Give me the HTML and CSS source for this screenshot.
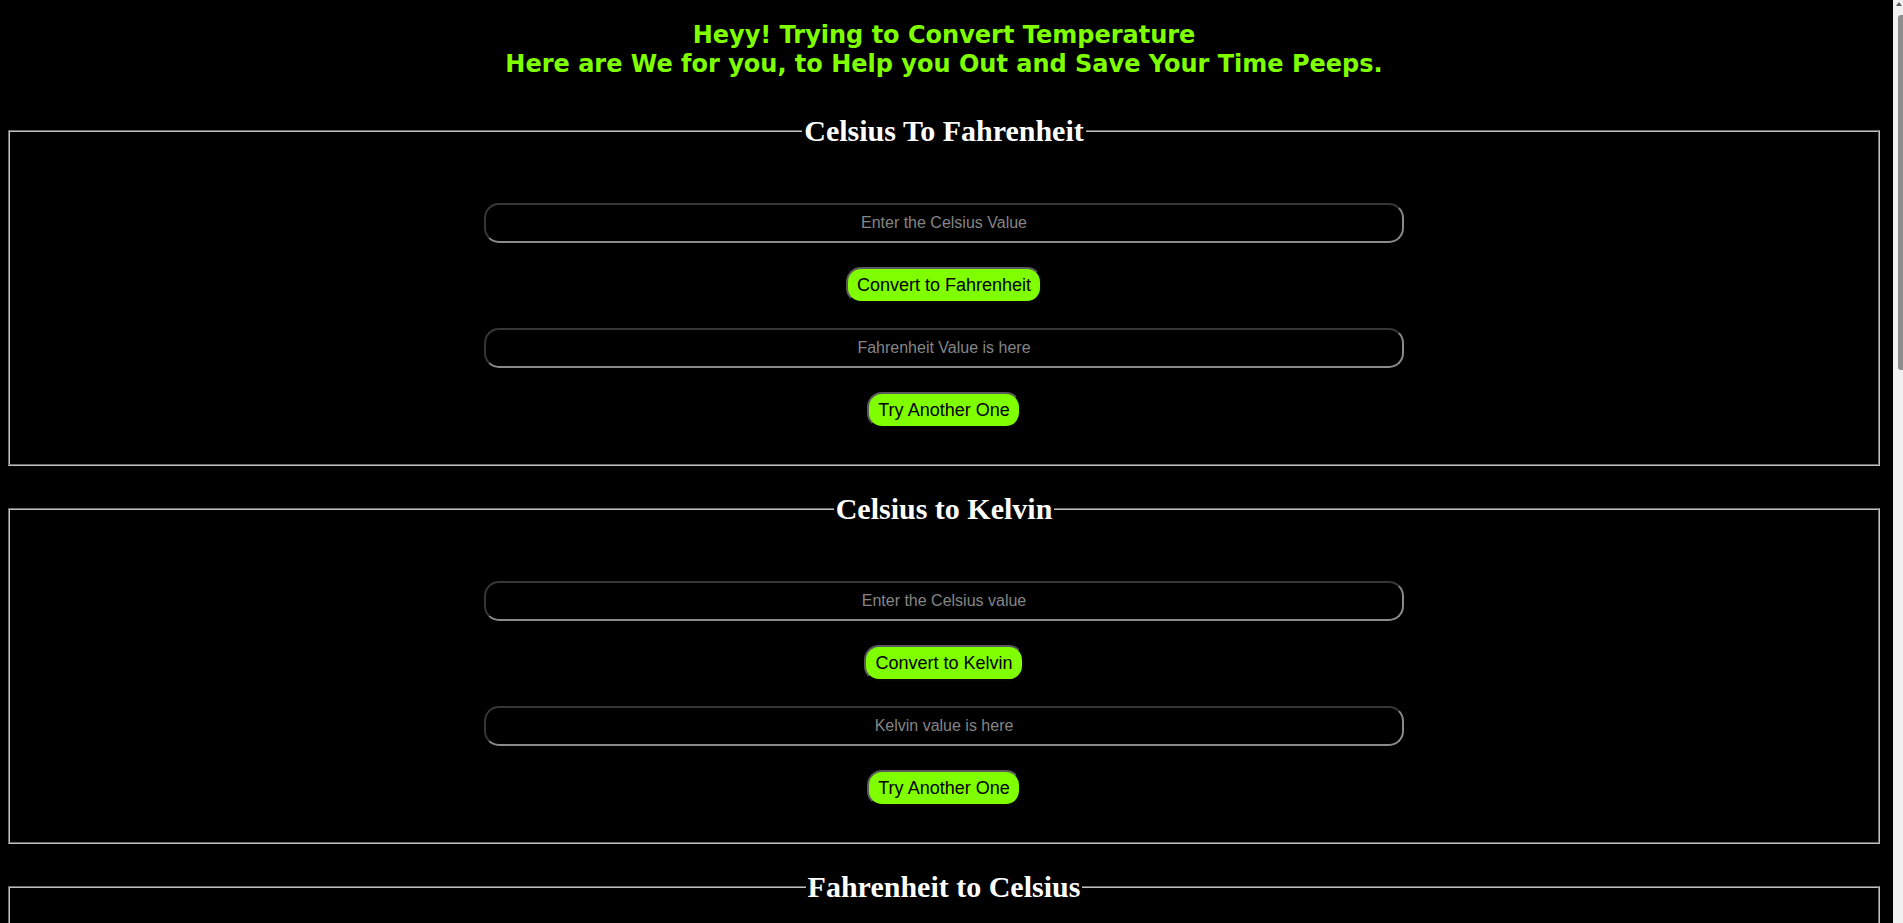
FILE: index.html
```html
<!DOCTYPE html>
<html lang="en">
<head>
<meta charset="utf-8">
<title>Temperature Converter</title>
<link rel="stylesheet" href="styles.css">
</head>
<body>
<h2 class="title">Heyy! Trying to Convert Temperature<br>Here are We for you, to Help you Out and Save Your Time Peeps.</h2>

<fieldset class="card">
  <legend class="card-title">Celsius To Fahrenheit</legend>
  <div class="stack">
    <input class="field" type="text" placeholder="Enter the Celsius Value">
    <button class="btn" type="button">Convert to Fahrenheit</button>
    <input class="field" type="text" placeholder="Fahrenheit Value is here" readonly>
    <button class="btn" type="button">Try Another One</button>
  </div>
</fieldset>

<fieldset class="card">
  <legend class="card-title">Celsius to Kelvin</legend>
  <div class="stack">
    <input class="field" type="text" placeholder="Enter the Celsius value">
    <button class="btn" type="button">Convert to Kelvin</button>
    <input class="field" type="text" placeholder="Kelvin value is here" readonly>
    <button class="btn" type="button">Try Another One</button>
  </div>
</fieldset>

<fieldset class="card">
  <legend class="card-title">Fahrenheit to Celsius</legend>
  <div class="stack">
    <input class="field" type="text" placeholder="Enter the Fahrenheit value">
    <button class="btn" type="button">Convert to Celsius</button>
    <input class="field" type="text" placeholder="Celsius value is here" readonly>
    <button class="btn" type="button">Try Another One</button>
  </div>
</fieldset>

<fieldset class="card">
  <legend class="card-title">Fahrenheit to Kelvin</legend>
  <div class="stack">
    <input class="field" type="text" placeholder="Enter the Fahrenheit value">
    <button class="btn" type="button">Convert to Kelvin</button>
    <input class="field" type="text" placeholder="Kelvin value is here" readonly>
    <button class="btn" type="button">Try Another One</button>
  </div>
</fieldset>

<fieldset class="card">
  <legend class="card-title">Kelvin to Celsius</legend>
  <div class="stack">
    <input class="field" type="text" placeholder="Enter the Kelvin value">
    <button class="btn" type="button">Convert to Celsius</button>
    <input class="field" type="text" placeholder="Celsius value is here" readonly>
    <button class="btn" type="button">Try Another One</button>
  </div>
</fieldset>

<fieldset class="card">
  <legend class="card-title">Kelvin to Fahrenheit</legend>
  <div class="stack">
    <input class="field" type="text" placeholder="Enter the Kelvin value">
    <button class="btn" type="button">Convert to Fahrenheit</button>
    <input class="field" type="text" placeholder="Fahrenheit value is here" readonly>
    <button class="btn" type="button">Try Another One</button>
  </div>
</fieldset>

<div class="scrollbar" aria-hidden="true">
  <div class="scrollbar-arrow"></div>
  <div class="scrollbar-thumb"></div>
</div>
</body>
</html>
```
FILE: styles.css
```css
html {
  background: #000;
}

body {
  margin: 8px 23px 8px 8px;
  background: #000;
  font-family: "Liberation Sans", Arial, sans-serif;
}

.title {
  margin: 13px 0 35px;
  text-align: center;
  color: #7fff00;
  font-family: "DejaVu Sans", Verdana, sans-serif;
  font-weight: bold;
  font-size: 24px;
  line-height: 29px;
}

.card {
  margin: 0 0 26px;
  padding: 0 12px;
  border: 2px groove #c0c0c0;
}

.card-title {
  padding: 0 2px;
  margin: 0 auto;
  color: #fff;
  font-family: "Liberation Serif", "Times New Roman", serif;
  font-weight: bold;
  font-size: 30px;
}

.stack {
  display: flex;
  flex-direction: column;
  align-items: center;
  gap: 24px;
  padding: 55px 0 36px;
}

.field {
  box-sizing: border-box;
  width: 920px;
  max-width: 100%;
  height: 40px;
  padding: 0 10px;
  background: #000;
  color: #ddd;
  border: 2px inset #8a8a8a;
  border-radius: 15px;
  font-family: "Liberation Sans", Arial, sans-serif;
  font-size: 16px;
  text-align: center;
  outline: none;
}

.field::placeholder {
  color: #858585;
}

.btn + .field {
  margin-top: 1px;
}

.btn {
  box-sizing: border-box;
  height: 36px;
  padding: 0 9px;
  background: #7fff00;
  color: #000;
  border: 2px outset #5a5a5a;
  border-radius: 15px;
  font-family: "Liberation Sans", Arial, sans-serif;
  font-size: 18px;
  cursor: pointer;
}

/* emulated browser scrollbar (overlays the viewport edge) */
.scrollbar {
  position: fixed;
  top: 0;
  right: 0;
  width: 10px;
  height: 100%;
  background: #f1f1f1;
}

.scrollbar-arrow {
  position: absolute;
  top: 2px;
  right: 1px;
  width: 0;
  height: 0;
  border-left: 3px solid transparent;
  border-right: 3px solid transparent;
  border-bottom: 4px solid #5a5a5a;
}

.scrollbar-thumb {
  position: absolute;
  top: 15px;
  right: 0;
  width: 5px;
  height: 355px;
  background: #8e8e8e;
  border-radius: 3px 0 0 3px;
}
```
